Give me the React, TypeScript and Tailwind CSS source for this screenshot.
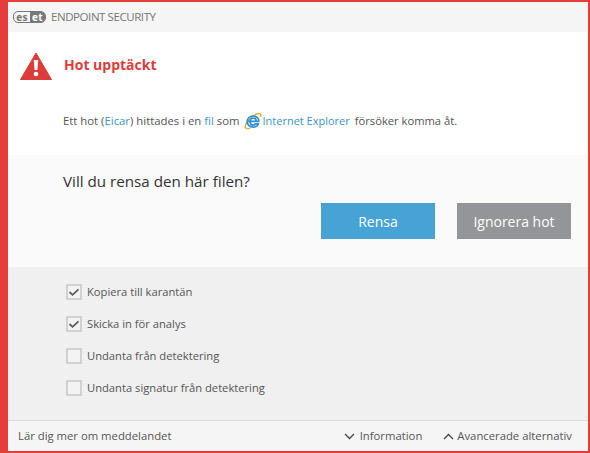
import React from "react";

function Box({ checked }: { checked?: boolean }) {
  return (
    <span className="flex h-4 w-4 shrink-0 items-center justify-center border-2 border-[#d2d2d2] bg-[#f3f3f3]">
      {checked && (
        <svg width="12" height="12" viewBox="0 0 12 12" fill="none">
          <path d="M1.5 6 L4.6 8.8 L10.5 3.4" stroke="#5a5a5a" strokeWidth="1.7" />
        </svg>
      )}
    </span>
  );
}

function Row({ label, checked }: { label: string; checked?: boolean }) {
  return (
    <div className="flex h-8 items-center gap-[5px]">
      <Box checked={checked} />
      <span>{label}</span>
    </div>
  );
}

function IE() {
  return (
    <svg width="18" height="18" viewBox="0 0 18 18" fill="none" className="ml-[4px] mr-px shrink-0">
      <path d="M1.4 16 C0.4 12.6 5 5 12.6 2 C15.6 0.9 17.6 1.8 16.6 5" stroke="#d3b13f" strokeWidth="1.5" />
      <path d="M1.6 16 C3 17.4 5 16.8 6.6 15.8" stroke="#d3b13f" strokeWidth="1.2" />
      <path d="M4.2 9.4 H14.8 C14.8 6 12.4 4 9.2 4 C5.8 4 3.2 6.4 3.2 9.6 C3.2 13 5.8 15.2 9.2 15.2 C11.6 15.2 13.6 14 14.4 11.8 H11.4 C10.8 12.8 10 13.2 9.2 13.2 C7.4 13.2 6.2 12 6 9.4 C6.2 7.2 7.4 6 9.2 6 C10.8 6 12 7.2 12 8.6" stroke="#2f8fd0" strokeWidth="1.7" />
    </svg>
  );
}

export default function App() {
  return (
    <div
      className="flex h-[453px] w-[590px] flex-col overflow-hidden border-t-2 border-r-2 border-b-2 border-l-8 border-[#e53e3a] bg-white text-[#555]"
      style={{ fontFamily: '"Open Sans", "Noto Sans", sans-serif' }}
    >
      <div className="flex h-[30px] items-center gap-[5px] bg-[#f5f5f5] pl-[5px] text-[11.5px] tracking-[-0.43px] text-[#777]">
        <div className="flex h-[12px] w-[33px] items-center overflow-hidden rounded-[5px] border border-[#777] text-[10px] font-bold leading-[10px] tracking-[0.3px]">
          <span className="flex h-full w-[16px] items-center justify-center text-[#777]">es</span>
          <span className="flex h-full flex-1 items-center justify-center bg-[#777] text-white">et</span>
        </div>
        <span>ENDPOINT SECURITY</span>
      </div>

      <div className="flex h-[123px] flex-col bg-white">
        <div className="flex h-[66px] items-center gap-[12px] pl-[12px]">
          <svg width="32" height="28" viewBox="0 0 32 28" className="mt-[2px]">
            <path d="M16 1 L31.5 27.5 H0.5 Z" fill="#dd3d3a" stroke="#dd3d3a" strokeLinejoin="round" />
            <path d="M13.8 8 H18.2 L17.4 18 H14.6 Z" fill="#fff" />
            <circle cx="16" cy="22" r="2.3" fill="#fff" />
          </svg>
          <span className="text-[14px] font-bold leading-[20px] text-[#dd3d3a]">Hot upptäckt</span>
        </div>
        <div className="mt-[14px] flex items-center whitespace-pre pl-[55px] text-[11.35px] leading-[18px]">
          <span>Ett hot (</span>
          <span className="text-[#3c94c4]">Eicar</span>
          <span>) hittades i en </span>
          <span className="text-[#3c94c4]">fil</span>
          <span> som</span>
          <IE />
          <span className="text-[11px] text-[#3c94c4]">Internet Explorer</span>
          <span className="ml-[5px] text-[11.2px]">försöker komma åt.</span>
        </div>
      </div>

      <div className="h-[112px] bg-[#fafafa] pl-[55px] pr-[17px] pt-[15px]">
        <div className="text-[15.2px] leading-[22px] text-[#333]">Vill du rensa den här filen?</div>
        <div className="mt-[11px] flex justify-end gap-[22px]">
          <div className="flex h-9 w-[114px] items-center justify-center bg-[#46a3d3] text-[14px] text-white">Rensa</div>
          <div className="flex h-9 w-[114px] items-center justify-center bg-[#939598] text-[14px] text-white">Ignorera hot</div>
        </div>
      </div>

      <div className="flex h-[153px] flex-col bg-[#f0f0f0] pl-[58px] pt-[9px] text-[11.2px]">
        <Row label="Kopiera till karantän" checked />
        <Row label="Skicka in för analys" checked />
        <Row label="Undanta från detektering" />
        <Row label="Undanta signatur från detektering" />
      </div>

      <div className="flex flex-1 items-center justify-between border-t border-[#dcdcdc] bg-[#f5f5f5] pb-px pl-[10px] pr-[16px] pt-[2px] text-[11.3px]">
        <span>Lär dig mer om meddelandet</span>
        <div className="flex items-center gap-[21px]">
          <div className="flex items-center gap-[5px]">
            <svg width="11" height="7" viewBox="0 0 11 7" fill="none"><path d="M1 1 L5.5 5.5 L10 1" stroke="#444" strokeWidth="1.3" /></svg>
            <span>Information</span>
          </div>
          <div className="flex items-center gap-[3px]">
            <svg width="11" height="7" viewBox="0 0 11 7" fill="none"><path d="M1 6 L5.5 1.5 L10 6" stroke="#444" strokeWidth="1.3" /></svg>
            <span>Avancerade alternativ</span>
          </div>
        </div>
      </div>
    </div>
  );
}
